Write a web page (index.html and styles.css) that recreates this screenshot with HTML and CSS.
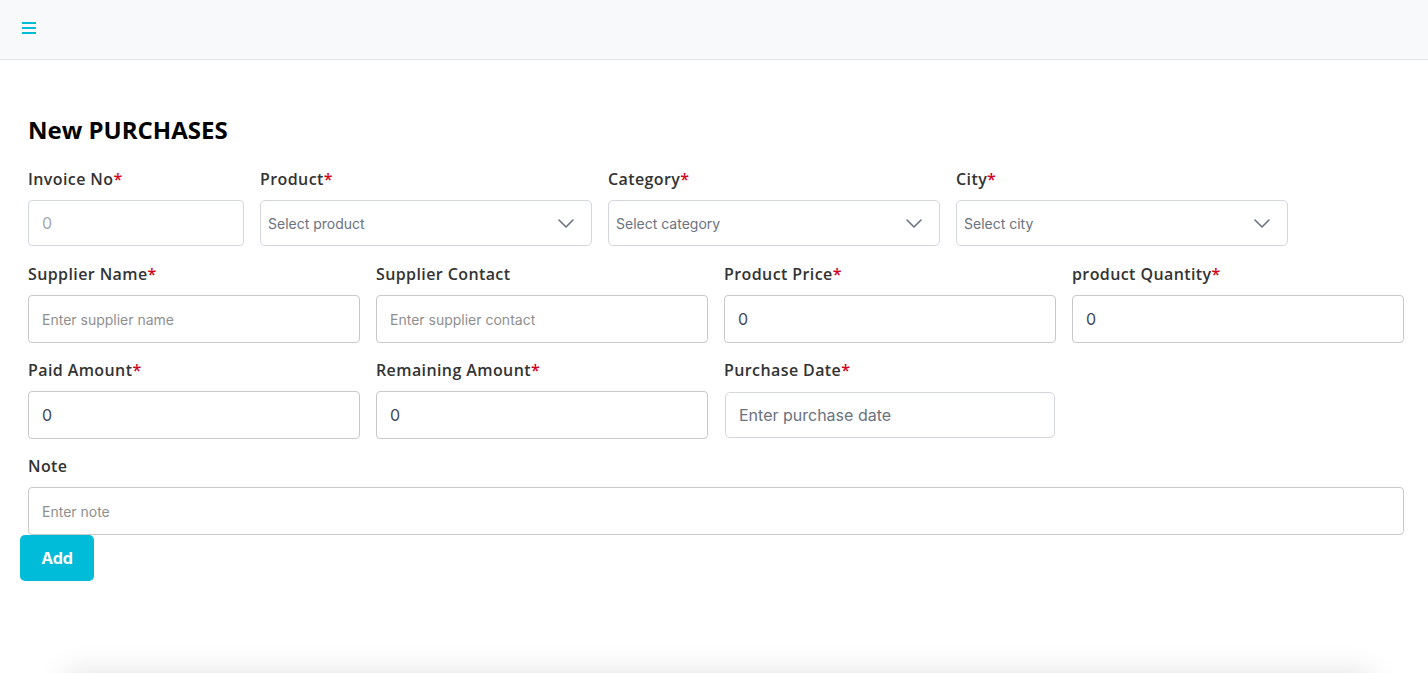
FILE: index.html
```html
<!DOCTYPE html>
<html>
<head>
<meta charset="utf-8">
<title>New Purchases</title>
<link rel="stylesheet" href="styles.css">
</head>
<body>
<header class="topbar">
  <button class="menu-btn" aria-label="menu">
    <svg width="14" height="12" viewBox="0 0 14 12"><rect x="0" y="0" width="14" height="2" fill="#00bcd6"/><rect x="0" y="5" width="14" height="2" fill="#00bcd6"/><rect x="0" y="10" width="14" height="2" fill="#00bcd6"/></svg>
  </button>
</header>
<main class="page">
  <h1 class="title">New PURCHASES</h1>
  <form class="form">
    <div class="row row-first">
      <div class="field">
        <label class="label">Invoice No<span class="req">*</span></label>
        <input class="input input-h46 muted-ph" placeholder="0">
      </div>
      <div class="field">
        <label class="label">Product<span class="req">*</span></label>
        <div class="select"><span>Select product</span><svg width="16" height="9" viewBox="0 0 16 9"><path d="M1 1l7 7 7-7" fill="none" stroke="#6b7280" stroke-width="1.6" stroke-linecap="round" stroke-linejoin="round"/></svg></div>
      </div>
      <div class="field">
        <label class="label">Category<span class="req">*</span></label>
        <div class="select"><span>Select category</span><svg width="16" height="9" viewBox="0 0 16 9"><path d="M1 1l7 7 7-7" fill="none" stroke="#6b7280" stroke-width="1.6" stroke-linecap="round" stroke-linejoin="round"/></svg></div>
      </div>
      <div class="field">
        <label class="label">City<span class="req">*</span></label>
        <div class="select"><span>Select city</span><svg width="16" height="9" viewBox="0 0 16 9"><path d="M1 1l7 7 7-7" fill="none" stroke="#6b7280" stroke-width="1.6" stroke-linecap="round" stroke-linejoin="round"/></svg></div>
      </div>
    </div>
    <div class="row">
      <div class="field">
        <label class="label">Supplier Name<span class="req">*</span></label>
        <input class="input small-ph" placeholder="Enter supplier name">
      </div>
      <div class="field">
        <label class="label">Supplier Contact</label>
        <input class="input small-ph" placeholder="Enter supplier contact">
      </div>
      <div class="field">
        <label class="label">Product Price<span class="req">*</span></label>
        <input class="input value" value="0">
      </div>
      <div class="field">
        <label class="label">product Quantity<span class="req">*</span></label>
        <input class="input value" value="0">
      </div>
    </div>
    <div class="row">
      <div class="field">
        <label class="label">Paid Amount<span class="req">*</span></label>
        <input class="input value" value="0">
      </div>
      <div class="field">
        <label class="label">Remaining Amount<span class="req">*</span></label>
        <input class="input value" value="0">
      </div>
      <div class="field">
        <label class="label">Purchase Date<span class="req">*</span></label>
        <input class="input date-input" placeholder="Enter purchase date">
      </div>
    </div>
    <div class="row row-full">
      <div class="field">
        <label class="label">Note</label>
        <input class="input small-ph" placeholder="Enter note">
      </div>
    </div>
    <button type="button" class="add-btn">Add</button>
  </form>
</main>
<div class="below-card"></div>
</body>
</html>
```
FILE: styles.css
```css
* { box-sizing: border-box; }
html, body { margin: 0; padding: 0; background: #fff; }
body { font-family: Inter, "Noto Sans", sans-serif; color: #333; }

.topbar {
  height: 60px;
  background: #f8f9fa;
  border-bottom: 1px solid #e3e3e3;
  display: flex;
  align-items: flex-start;
  padding: 22px 0 0 22px;
}
.menu-btn {
  border: 0; background: none; padding: 0; margin: 0;
  width: 14px; height: 12px; display: flex;
}

.page { padding: 55px 24px 0 28px; }
.title {
  margin: 0;
  font-family: "Open Sans", sans-serif;
  font-weight: 700;
  font-size: 24px;
  line-height: 30px;
  color: #000;
}

.form { margin-top: 23px; display: flex; flex-direction: column; }
.row {
  display: grid;
  grid-template-columns: repeat(4, 332px);
  column-gap: 16px;
  margin-bottom: 16px;
}
.row-first { grid-template-columns: 216px 332px 332px 332px; margin-bottom: 17px; }
.row-full { grid-template-columns: 1376px; margin-bottom: 0; }

.field { display: flex; flex-direction: column; }
.label {
  font-family: "Open Sans", sans-serif;
  font-weight: 600;
  font-size: 16px;
  letter-spacing: 0.4px;
  line-height: 22px;
  color: #333;
  margin-bottom: 10px;
}
.req { color: #d0021b; }

.input {
  height: 48px;
  border: 1px solid #c9c9c9;
  border-radius: 4px;
  padding: 0 13px;
  font-family: Inter, sans-serif;
  font-size: 16px;
  color: #3f4656;
  background: #fff;
  outline: none;
}
.input-h46 { height: 46px; border-color: #d5d8de; }
.muted-ph::placeholder { color: #a2a8b3; font-size: 16px; }
.small-ph::placeholder { color: #8f8f8f; font-size: 14px; }
.value { color: #3f4656; }
.date-input {
  height: 46px;
  margin-top: 1px;
  margin-left: 1px;
  width: 330px;
  border-color: #d3d6dc;
  border-radius: 5px;
}
.date-input::placeholder { color: #6b7280; font-size: 16px; }

.select {
  height: 46px;
  border: 1px solid #d3d6dc;
  border-radius: 5px;
  display: flex;
  align-items: center;
  justify-content: space-between;
  padding: 0 17px 0 7px;
  font-family: Inter, sans-serif;
  font-size: 14px;
  color: #6b7280;
}

.add-btn {
  align-self: flex-start;
  margin-left: -8px;
  width: 74px;
  height: 46px;
  border: 0;
  border-radius: 5px;
  background: #00bcd8;
  color: #fff;
  font-family: Inter, sans-serif;
  font-weight: 700;
  font-size: 16px;
}

.below-card {
  margin: 92px 56px 0 64px;
  height: 200px;
  background: #fff;
  box-shadow: 0 0 28px rgba(0,0,0,0.12);
}
```
